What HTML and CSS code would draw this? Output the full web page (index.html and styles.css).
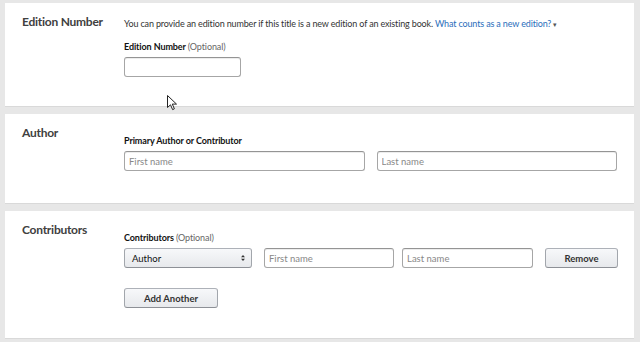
FILE: index.html
```html
<!DOCTYPE html>
<html lang="en">
<head>
    <meta charset="UTF-8">
    <title>Book Details</title>
    <link rel="stylesheet" href="styles.css">
</head>
<body>

<!-- Edition number -->
<section class="card">
    <h2 class="card-title">Edition Number</h2>
    <div class="card-body">
        <p class="help">You can provide an edition number if this title is a new edition of an existing book. <a href="#" class="link">What counts as a new edition?</a> <span class="caret">&#9662;</span></p>
        <label class="field-label edition-label">Edition Number <span class="optional">(Optional)</span></label>
        <input type="text" class="input edition-input">
    </div>
</section>

<!-- Author -->
<section class="card author-card">
    <h2 class="card-title">Author</h2>
    <div class="card-body">
        <label class="field-label first-label">Primary Author or Contributor</label>
        <div class="name-row">
            <input type="text" class="input" placeholder="First name">
            <input type="text" class="input" placeholder="Last name">
        </div>
    </div>
</section>

<!-- Contributors -->
<section class="card last">
    <h2 class="card-title">Contributors</h2>
    <div class="card-body">
        <label class="field-label first-label">Contributors <span class="optional">(Optional)</span></label>
        <div class="contrib-row">
            <div class="select">
                <span>Author</span>
                <svg width="6" height="8" viewBox="0 0 6 8"><path d="M3 1 L5 3.2 H1 Z M3 7 L5 4.8 H1 Z" fill="#333"/></svg>
            </div>
            <input type="text" class="input contrib-first" placeholder="First name">
            <input type="text" class="input contrib-last" placeholder="Last name">
            <button class="btn remove-btn">Remove</button>
        </div>
        <button class="btn add-btn">Add Another</button>
    </div>
</section>

<!-- mouse pointer -->
<svg class="cursor" width="11" height="16" viewBox="0 0 11 16">
    <path d="M0.5 0.5 L0.5 12.5 L3.5 9.8 L5.6 14.6 L7.4 13.8 L5.3 9.1 L9.5 9.1 Z" fill="#fff" stroke="#222" stroke-width="1"/>
</svg>

</body>
</html>
```

FILE: styles.css
```css
* {
    box-sizing: border-box;
}
body {
    margin: 0;
    padding: 3px 6px 5px 5px;
    background-color: #e7e7e7;
    font-family: Lato, "Open Sans", Arial, sans-serif;
    color: #333;
    position: relative;
}
.card {
    display: grid;
    grid-template-columns: 102px 1fr;
    background-color: #fff;
    padding: 11px 17px 29px 17px;
    margin-bottom: 7px;
    border-bottom: 1px solid #d9d9d9;
}
.author-card {
    padding-bottom: 32px;
}
.card.last {
    margin-bottom: 0;
    padding-bottom: 30px;
}
.card-title {
    margin: 0;
    font-size: 12px;
    line-height: 16px;
    font-weight: 700;
    letter-spacing: -0.25px;
    color: #404040;
}
.card-body {
    padding-top: 3px;
}
.help {
    margin: 0;
    font-size: 9px;
    line-height: 14px;
    letter-spacing: -0.15px;
    color: #333;
    white-space: nowrap;
}
.link {
    color: #2a6ebb;
    text-decoration: none;
}
.caret {
    font-size: 7px;
    color: #555;
}
.field-label {
    display: block;
    font-size: 9px;
    line-height: 13px;
    font-weight: 700;
    letter-spacing: -0.1px;
    color: #111;
    margin-bottom: 4px;
}
.edition-label {
    margin-top: 9px;
}
.first-label {
    margin-top: 6px;
}
.optional {
    font-weight: 400;
    color: #666;
}
.input {
    display: block;
    height: 20px;
    border: 1px solid #a6a6a6;
    border-top-color: #949494;
    border-radius: 3px;
    box-shadow: 0 1px 0 rgba(255, 255, 255, 0.5), inset 0 1px 0 rgba(0, 0, 0, 0.07);
    padding: 0 4px;
    font-family: inherit;
    font-size: 9.5px;
    color: #333;
    background: #fff;
}
.input::placeholder {
    color: #888;
}
.edition-input {
    width: 117px;
}
.name-row {
    display: grid;
    grid-template-columns: 1fr 1fr;
    column-gap: 12px;
}
.contrib-row {
    display: flex;
}
.select {
    display: flex;
    align-items: center;
    justify-content: space-between;
    width: 128px;
    height: 20px;
    padding: 0 5px 0 7px;
    border: 1px solid #adb1b8;
    border-color: #adb1b8 #a2a6ac #8d9096;
    border-radius: 3px;
    background: linear-gradient(to bottom, #f7f8fa, #e7e9ec);
    font-size: 9.5px;
    color: #111;
}
.contrib-first {
    width: 130px;
    margin-left: 12px;
}
.contrib-last {
    width: 131px;
    margin-left: 8px;
}
.btn {
    display: block;
    height: 20px;
    border: 1px solid #adb1b8;
    border-color: #adb1b8 #a2a6ac #8d9096;
    border-radius: 3px;
    background: linear-gradient(to bottom, #f7f8fa, #e7e9ec);
    font-family: inherit;
    font-size: 9.5px;
    font-weight: 700;
    color: #333;
    padding: 0;
    cursor: pointer;
}
.remove-btn {
    width: 73px;
    margin-left: 12px;
}
.add-btn {
    width: 94px;
    margin-top: 20px;
}
.cursor {
    position: absolute;
    left: 167px;
    top: 95px;
}
```
